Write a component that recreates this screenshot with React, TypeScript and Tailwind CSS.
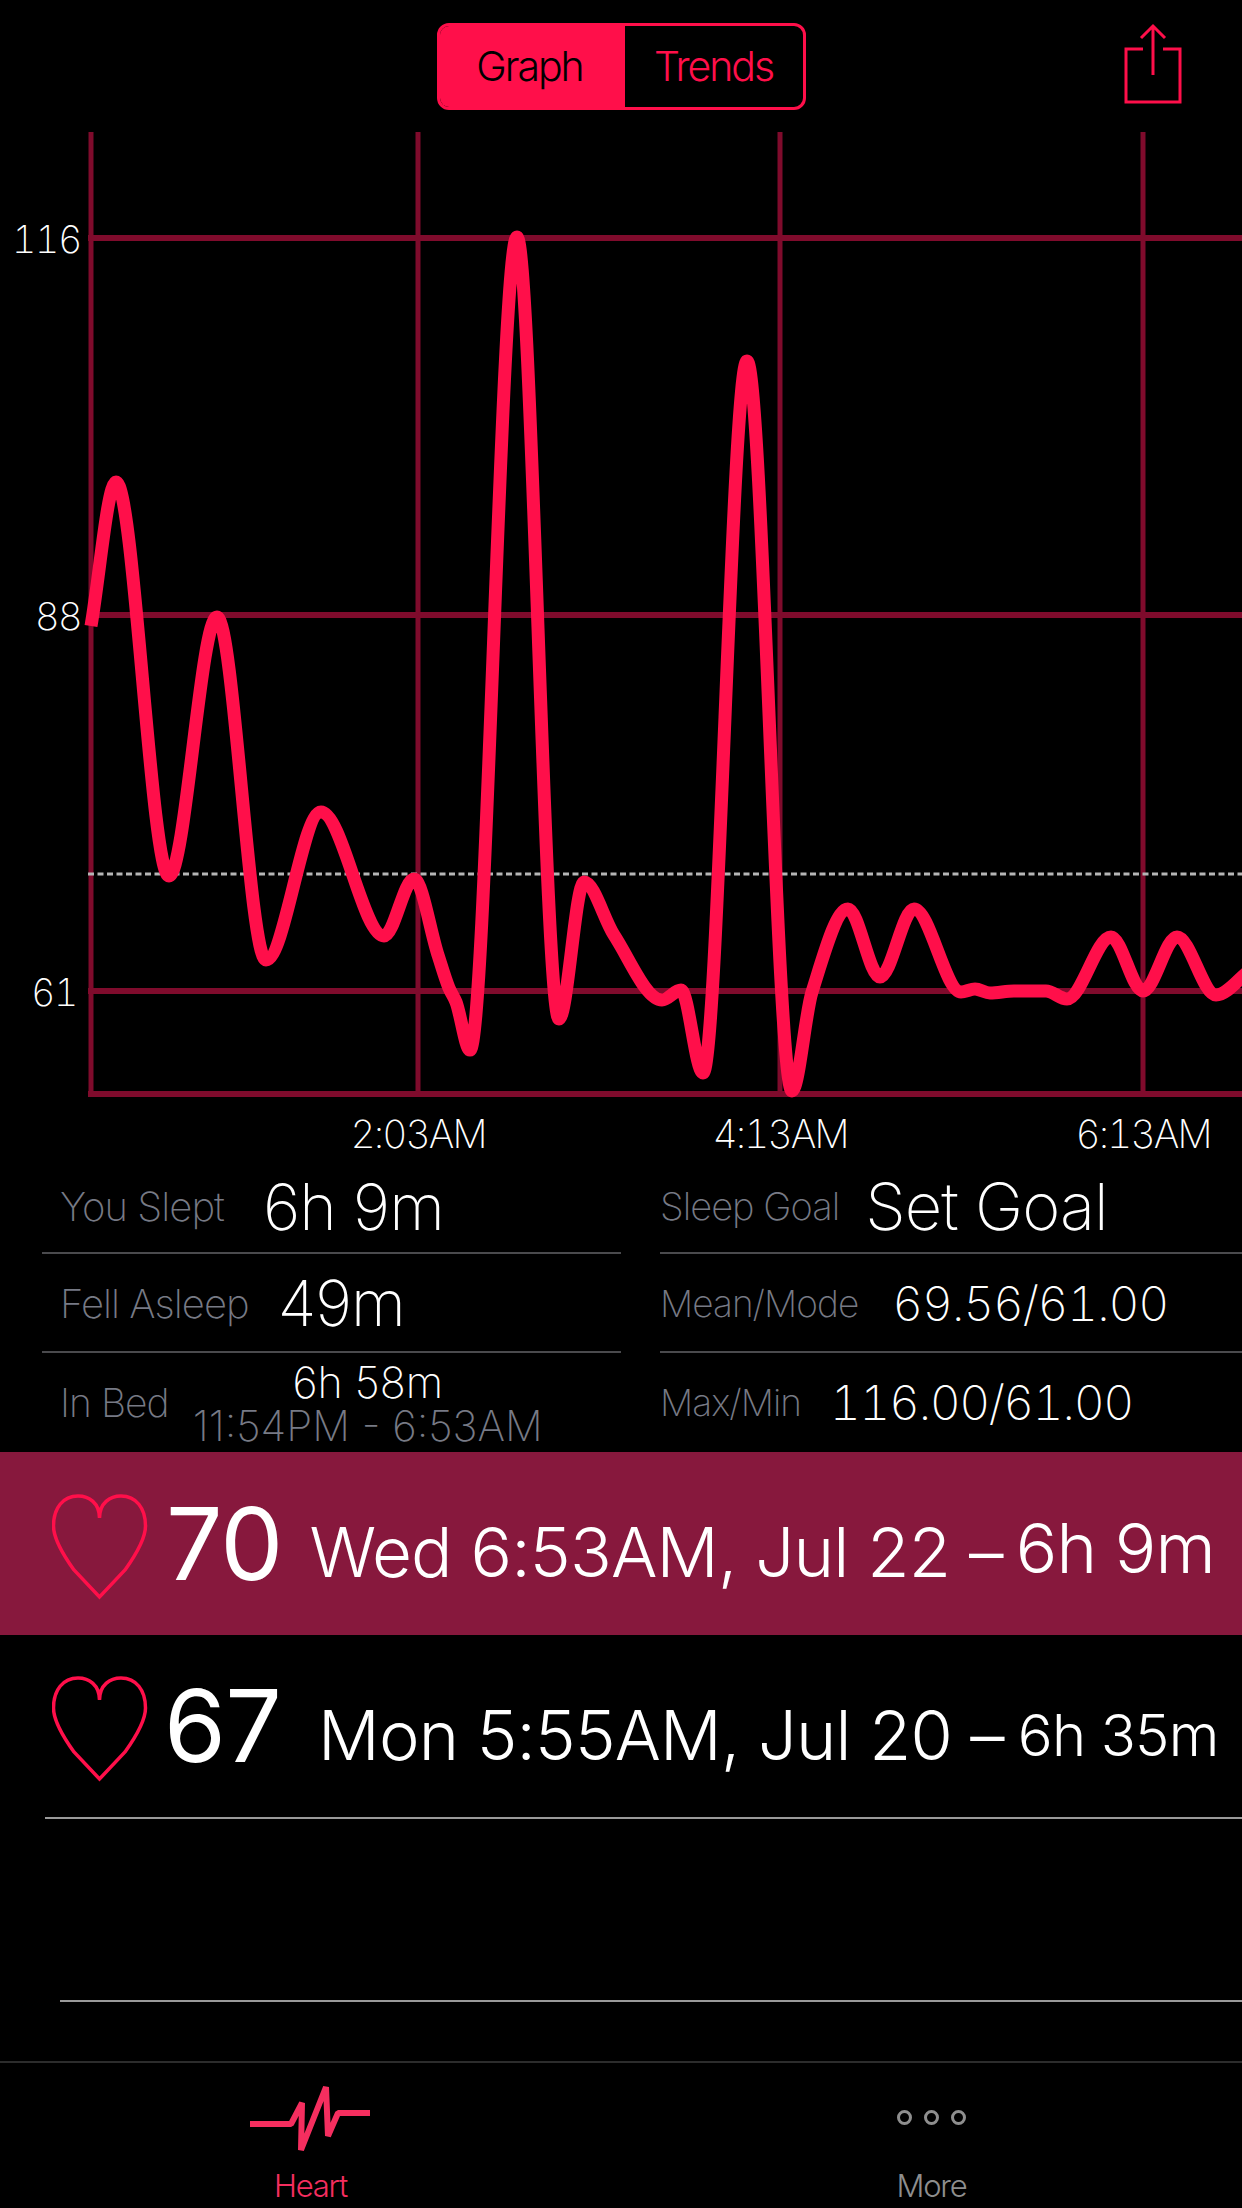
const PINK = '#ff0f4a'

const POINTS: [number, number][] = [
  [91, 626], [116, 482], [169, 876], [217, 617], [266, 960], [321, 812], [384, 936], [414, 879],
  [438, 955], [449, 988], [456, 1002], [470, 1050], [517, 237], [559, 1019], [584, 882], [614, 935], [662, 1000], [681, 990],
  [703, 1073], [747, 361], [792, 1091], [812, 992], [848, 909], [880, 977], [914, 909], [961, 992],
  [975, 989], [990, 993], [1014, 991], [1046, 991], [1067, 999], [1111, 937], [1143, 991], [1177, 937],
  [1216, 995], [1250, 970],
]

// monotone cubic through the points, flat at every peak and trough
function buildCurve(pts: [number, number][]) {
  const slopes = pts.slice(1).map((p, i) => (p[1] - pts[i][1]) / (p[0] - pts[i][0]))
  const tangents = pts.map((_, i) => {
    if (i === 0) return slopes[0]
    if (i === pts.length - 1) return slopes[i - 1]
    const a = slopes[i - 1]
    const b = slopes[i]
    if (a * b <= 0) return 0
    return (2 * a * b) / (a + b)
  })
  let d = `M${pts[0][0]} ${pts[0][1]}`
  for (let i = 0; i < pts.length - 1; i++) {
    const h = (pts[i + 1][0] - pts[i][0]) / 3
    d += ` C${pts[i][0] + h} ${pts[i][1] + tangents[i] * h} ${pts[i + 1][0] - h} ${pts[i + 1][1] - tangents[i + 1] * h} ${pts[i + 1][0]} ${pts[i + 1][1]}`
  }
  return d
}

function Chart() {
  return (
    <svg viewBox="0 132 1242 1025" className="block h-[1025px] w-[1242px]">
      <g stroke="#7f0b2c">
        <path d="M91 132V1095M418 132V1095M780 132V1095M1143 132V1095" strokeWidth="5" />
        <path d="M88 238H1242M88 615H1242M88 991H1242M88 1094H1242" strokeWidth="6" />
      </g>
      <path d="M88 874H1242" stroke="#b5b5b5" strokeWidth="3" strokeDasharray="6 3.5" />
      <path d={buildCurve(POINTS)} fill="none" stroke={PINK} strokeWidth="13" strokeLinejoin="round" />
      <g fill="#fff" fontSize="38" className="font-extralight tracking-[-0.04em] tabular-nums">
        <text x="81" y="253" textAnchor="end">116</text>
        <text x="81" y="630" textAnchor="end">88</text>
        <text x="77" y="1006" textAnchor="end">61</text>
      </g>
      <g fill="#fff" fontSize="39" className="font-extralight tracking-[-0.05em] tabular-nums">
        <text x="418" y="1148" textAnchor="middle">2:03AM</text>
        <text x="780" y="1148" textAnchor="middle">4:13AM</text>
        <text x="1143" y="1148" textAnchor="middle">6:13AM</text>
      </g>
    </svg>
  )
}

function Heart() {
  return (
    <svg viewBox="0 0 96 106" className="mt-[6px] ml-[52px] h-[106px] w-[96px] shrink-0" fill="none" stroke={PINK} strokeWidth="3.5">
      <path d="M47.5 24C47.5 9 37 2 26 2C11 2 1.5 14 1.5 32C1.5 44 12 62 22 76L47.5 103L73 76C83 62 93.5 44 93.5 32C93.5 14 84 2 69 2C58 2 47.5 9 47.5 24Z" strokeLinejoin="miter" />
    </svg>
  )
}

export default function App() {
  return (
    <div className="flex h-[2208px] w-[1242px] flex-col overflow-hidden bg-black text-white [font-family:Inter,'Liberation_Sans',sans-serif]">
      <header className="grid h-[132px] shrink-0 grid-cols-[1fr_auto_1fr] items-start pt-[23px]">
        <div />
        <div className="flex h-[87px] w-[369px] overflow-hidden rounded-[12px] border-[3px] border-[#ff0f4a] text-[41px] font-light tracking-[-0.05em]">
          <div className="flex w-[185px] items-center justify-center bg-[#ff0f4a] pr-[5px] text-black">Graph</div>
          <div className="flex flex-1 items-center justify-center text-[#ff0f4a]">Trends</div>
        </div>
        <svg viewBox="0 0 60 82" className="mr-[59px] h-[82px] w-[60px] justify-self-end" fill="none" stroke={PINK} strokeWidth="3">
          <path d="M20 26H3V79H57V26H40" />
          <path d="M30 52V3M18 15L30 3L42 15" />
        </svg>
      </header>

      <Chart />

      <section className="grid h-[295px] shrink-0 grid-cols-[579px_582px] gap-x-[39px] pl-[42px] font-extralight tracking-[-0.06em]">
        <div className="flex flex-col">
          <div className="flex h-[97px] items-center border-b-2 border-[#4a4a4d] pt-[4px] pl-[18px]">
            <span className="text-[40px] text-[#777a85]">You Slept</span>
            <span className="ml-[39px] text-[64px]">6h 9m</span>
          </div>
          <div className="flex h-[99px] items-center border-b-2 border-[#4a4a4d] pt-[2px] pl-[18px]">
            <span className="text-[40px] text-[#777a85]">Fell Asleep</span>
            <span className="ml-[29px] text-[63px]">49m</span>
          </div>
          <div className="flex h-[99px] items-center pt-[2px] pl-[18px]">
            <span className="text-[39px] text-[#777a85]">In Bed</span>
            <div className="ml-[24px] flex flex-col items-center leading-[43px] tracking-[0em]">
              <span className="text-[43px]">6h 58m</span>
              <span className="text-[42px] text-[#777a85]">11:54PM - 6:53AM</span>
            </div>
          </div>
        </div>
        <div className="flex flex-col">
          <div className="flex h-[97px] items-center border-b-2 border-[#4a4a4d] pt-[4px]">
            <span className="text-[38px] text-[#777a85]">Sleep Goal</span>
            <span className="ml-[26px] text-[65px]">Set Goal</span>
          </div>
          <div className="flex h-[99px] items-center border-b-2 border-[#4a4a4d] pt-[2px]">
            <span className="text-[37px] text-[#777a85]">Mean/Mode</span>
            <span className="ml-[34px] text-[48px] tracking-[-0.027em] tabular-nums">69.56/61.00</span>
          </div>
          <div className="flex h-[99px] items-center">
            <span className="text-[37px] text-[#777a85]">Max/Min</span>
            <span className="ml-[29px] text-[48px] tracking-[-0.032em] tabular-nums">116.00/61.00</span>
          </div>
        </div>
      </section>

      <div className="flex h-[183px] shrink-0 items-center bg-[#87183d]">
        <Heart />
        <div className="ml-[18px] flex items-baseline font-light tracking-[-0.05em]">
          <span className="text-[100px] font-normal">70</span>
          <span className="ml-[27px] -translate-y-[3px] text-[69px]">Wed 6:53AM, Jul 22 –</span>
          <span className="ml-[13px] -translate-y-[7px] text-[69px]">6h 9m</span>
        </div>
      </div>
      <div className="flex h-[182px] shrink-0 items-center">
        <Heart />
        <div className="ml-[16px] flex items-baseline font-light tracking-[-0.05em]">
          <span className="text-[100px] font-normal">67</span>
          <span className="ml-[37px] -translate-y-[2px] text-[68.5px]">Mon 5:55AM, Jul 20 –</span>
          <span className="ml-[14px] -translate-y-[6px] text-[58px]">6h 35m</span>
        </div>
      </div>
      <div className="ml-[45px] h-[2px] shrink-0 bg-[#9a9a9a]" />
      <div className="ml-[60px] h-[183px] shrink-0 border-b-2 border-[#9a9a9a]" />
      <div className="flex-1" />

      <nav className="grid h-[147px] shrink-0 grid-cols-2 border-t-2 border-[#2c2c2c]">
        <div className="flex flex-col items-center pt-[22px]">
          <svg viewBox="0 0 122 68" className="h-[68px] w-[122px]" fill="none" stroke="#f52e5f" strokeWidth="6">
            <path d="M0 39H41L52 18L51 65L76 2L78 51L88 28H120" strokeLinejoin="bevel" />
          </svg>
          <span className="mt-[10px] text-[31px] font-light tracking-[-0.04em] text-[#f52e5f]">Heart</span>
        </div>
        <div className="flex flex-col items-center pt-[22px]">
          <div className="flex h-[64px] items-center gap-[12px]">
            <span className="h-[15px] w-[15px] rounded-full border-[3px] border-[#8e8e8e]" />
            <span className="h-[15px] w-[15px] rounded-full border-[3px] border-[#8e8e8e]" />
            <span className="h-[15px] w-[15px] rounded-full border-[3px] border-[#8e8e8e]" />
          </div>
          <span className="mt-[14px] text-[31px] font-light tracking-[-0.04em] text-[#8e8e8e]">More</span>
        </div>
      </nav>
    </div>
  )
}
